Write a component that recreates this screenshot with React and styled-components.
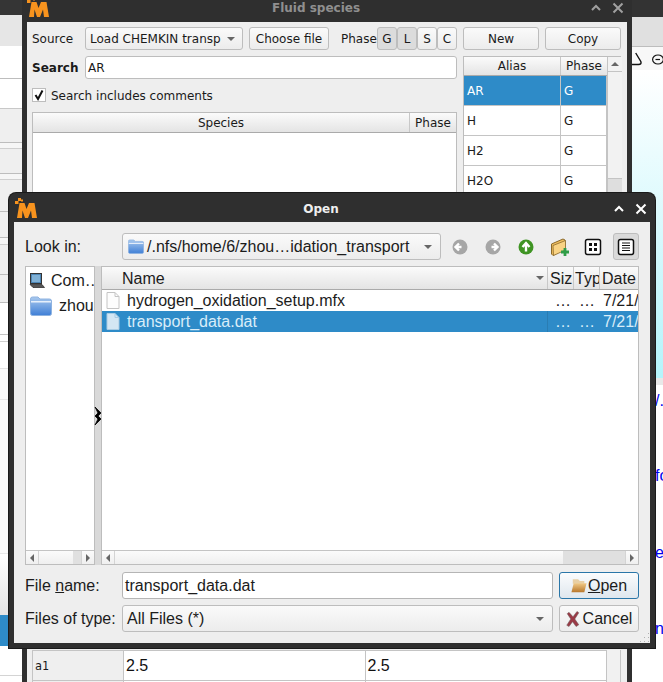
import React from "react";
import styled, {createGlobalStyle} from "styled-components";

const GlobalStyle = createGlobalStyle`
  html, body {
    margin: 0;
    padding: 0;
    overflow: hidden;
    background: white;
  }
`;

const QT_SANS = `"DejaVu Sans", sans-serif`;
const DIALOG_SANS = `"Liberation Sans", Arial, sans-serif`;
const SELECTED = "#2e8bc8";

const Desktop = styled.div`
  position: relative;
  width: 663px;
  height: 682px;
  overflow: hidden;
  display: flex;
  justify-content: space-between;
  background: white;
`;

const Strip = styled.div`
  display: flex;
  flex-direction: column;
  width: ${({$w}) => $w}px;
  height: 682px;
  overflow: hidden;
  flex: none;
`;

const Band = styled.div`
  flex: none;
  height: ${({$h}) => $h}px;
  background: ${({$bg}) => $bg};
  border-bottom: ${({$line}) => ($line ? `1px solid ${$line}` : "none")};
  box-sizing: border-box;
`;

const IconBand = styled(Band)`
  display: flex;
  align-items: center;
  gap: 8px;
  svg {
    flex: none;
    overflow: visible;
  }
`;

const LinkArea = styled.div`
  display: flex;
  flex-direction: column;
  padding-left: 23px;
  font: 16px ${DIALOG_SANS};
  color: #0000ee;
  white-space: nowrap;
`;

const LinkLine = styled.div`
  height: 19px;
  margin-top: ${({$top}) => $top}px;
  line-height: 19px;
`;

const Win = styled.div`
  position: absolute;
  left: ${({$left}) => $left}px;
  top: ${({$top}) => $top}px;
  width: ${({$w}) => $w}px;
  height: ${({$h}) => $h}px;
  box-sizing: border-box;
  display: flex;
  flex-direction: column;
  background: #2f2f2f;
  padding: 0 5px 5px;
  border-radius: ${({$round}) => ($round ? "7px 7px 0 0" : "0")};
  box-shadow: ${({$round}) => ($round ? "0 0 0 1px #1a1a1a" : "none")};
  overflow: hidden;
`;

const TitleBar = styled.div`
  flex: none;
  position: relative;
  box-sizing: border-box;
  height: ${({$h}) => $h}px;
  padding: ${({$pad}) => $pad}px 22px 0 0;
  display: flex;
  align-items: center;
  justify-content: center;
  font: bold 12px ${QT_SANS};
  color: ${({$color}) => $color};
`;

const LogoSlot = styled.div`
  position: absolute;
  left: ${({$left}) => $left}px;
  top: ${({$top}) => $top}px;
  display: flex;
`;

const TitleButtons = styled.div`
  position: absolute;
  right: ${({$right}) => $right}px;
  top: ${({$top}) => $top}px;
  display: flex;
  gap: 9px;
`;

const FluidBody = styled.div`
  flex: 1;
  min-height: 0;
  background: #eeeeee;
  padding: 5px 5px 0;
  display: flex;
  flex-direction: column;
  font: 12px ${QT_SANS};
  color: #1a1a1a;
`;

const Toolbar = styled.div`
  flex: none;
  height: 23px;
  display: flex;
  align-items: center;
`;

const FieldLabel = styled.span`
  flex: none;
  width: ${({$w}) => $w}px;
  margin-left: ${({$ml}) => $ml || 0}px;
  font-weight: ${({$bold}) => ($bold ? "bold" : "normal")};
  white-space: nowrap;
`;

const QtButton = styled.div`
  flex: none;
  box-sizing: border-box;
  width: ${({$w}) => $w}px;
  height: 23px;
  margin-left: ${({$ml}) => $ml || 0}px;
  display: flex;
  align-items: center;
  padding: 0 ${({$combo}) => ($combo ? "7px 0 4px" : "0")};
  justify-content: ${({$combo}) => ($combo ? "space-between" : "center")};
  border: 1px solid #bdbdbd;
  border-radius: 3px;
  background: ${({$on}) =>
    $on ? "#dcdcdc" : "linear-gradient(#fafafa, #ececec)"};
  white-space: nowrap;
`;

const PhaseGroup = styled.div`
  display: flex;
  margin-left: 1px;
`;

const Arrow = styled.span`
  flex: none;
  width: 0;
  height: 0;
  border-left: 4px solid transparent;
  border-right: 4px solid transparent;
  border-top: 4px solid #666;
`;

const FluidMain = styled.div`
  flex: none;
  height: 590px;
  margin-top: 6px;
  display: flex;
  gap: 6px;
`;

const LeftColumn = styled.div`
  flex: none;
  width: 425px;
  display: flex;
  flex-direction: column;
`;

const SearchRow = styled.div`
  height: 23px;
  display: flex;
  align-items: center;
`;

const TextInput = styled.div`
  flex: 1;
  box-sizing: border-box;
  height: ${({$h}) => $h}px;
  display: flex;
  align-items: center;
  padding-left: ${({$pad}) => $pad}px;
  background: white;
  border: 1px solid #bdbdbd;
  border-radius: 3px;
`;

const CheckRow = styled.div`
  height: 14px;
  margin-top: 9px;
  display: flex;
  align-items: center;
  gap: 5px;
`;

const CheckText = styled.span`
  padding-top: 2px;
`;

const CheckBox = styled.div`
  box-sizing: border-box;
  width: 14px;
  height: 14px;
  display: flex;
  align-items: center;
  justify-content: center;
  background: white;
  border: 1px solid #bdbdbd;
`;

const SpeciesTable = styled.div`
  flex: 1;
  margin-top: 10px;
  background: white;
  border: 1px solid #bdbdbd;
  box-sizing: border-box;
`;

const HeaderRow = styled.div`
  display: flex;
  flex: none;
  height: ${({$h}) => $h}px;
  box-sizing: border-box;
  background: linear-gradient(#fbfbfb, #e4e4e4);
  border-bottom: 1px solid #aaaaaa;
`;

const HeaderCell = styled.div`
  box-sizing: border-box;
  flex: ${({$w}) => ($w ? `0 0 ${$w}px` : 1)};
  display: flex;
  align-items: center;
  justify-content: center;
  overflow: hidden;
  white-space: nowrap;
  border-right: ${({$last}) => ($last ? "none" : "1px solid #c8c8c8")};
`;

const AliasPanel = styled.div`
  flex: none;
  width: 158px;
  box-sizing: border-box;
  display: flex;
  background: #eee;
  border: 1px solid #bdbdbd;
  border-bottom: none;
`;

const AliasTable = styled.div`
  flex: none;
  width: 143px;
  background: white;
`;

const AliasRow = styled.div`
  display: flex;
  height: 30px;
  box-sizing: border-box;
  border-bottom: 1px solid #c4c4c4;
  background: ${({$selected}) => ($selected ? SELECTED : "white")};
  color: ${({$selected}) => ($selected ? "white" : "#1a1a1a")};
`;

const AliasCell = styled.div`
  box-sizing: border-box;
  flex: ${({$w}) => ($w ? `0 0 ${$w}px` : 1)};
  display: flex;
  align-items: center;
  padding-left: 3px;
  border-right: 1px solid #c4c4c4;
`;

const VScroll = styled.div`
  flex: none;
  width: 14px;
  display: flex;
  flex-direction: column;
  background: #f2f2f2;
  border-left: 1px solid #c4c4c4;
`;

const ScrollCap = styled.div`
  height: 14px;
  display: flex;
  align-items: center;
  justify-content: center;
  border-bottom: 1px solid #c4c4c4;
`;

const ScrollThumb = styled.div`
  margin-top: ${({$top}) => $top}px;
  flex: 1;
  background: #dedede;
  border-top: 1px solid #c4c4c4;
`;

const CapUp = styled.span`
  width: 0;
  height: 0;
  border-left: 4px solid transparent;
  border-right: 4px solid transparent;
  border-bottom: 4px solid #666;
`;

const ParamFrame = styled.div`
  flex: none;
  margin-top: 4px;
  width: 589px;
  height: 70px;
  box-sizing: border-box;
  background: #f1f1f1;
  border-right: 1px solid #c4c4c4;
`;

const ParamTable = styled.div`
  width: 575px;
  box-sizing: border-box;
  background: white;
  border: 1px solid #c4c4c4;
`;

const ParamRow = styled.div`
  display: flex;
  height: 30px;
  box-sizing: border-box;
  border-bottom: 1px solid #c4c4c4;
`;

const ParamName = styled.div`
  flex: 0 0 91px;
  box-sizing: border-box;
  display: flex;
  align-items: center;
  padding-left: 2px;
  font: 11.5px "DejaVu Sans Mono", monospace;
  background: #efefef;
  border-right: 1px solid #c4c4c4;
`;

const ParamValue = styled.div`
  flex: 1;
  box-sizing: border-box;
  display: flex;
  align-items: center;
  padding-left: 2px;
  font: 16px ${DIALOG_SANS};
  color: #111;
  border-right: ${({$last}) => ($last ? "none" : "1px solid #c4c4c4")};
`;

const DialogBody = styled.div`
  position: relative;
  flex: 1;
  min-height: 0;
  box-sizing: border-box;
  background: #eeeeee;
  padding: 11px 11px 0;
  display: flex;
  flex-direction: column;
  font: 16px ${DIALOG_SANS};
  color: #1c1c1c;
`;

const DialogRow = styled.div`
  flex: none;
  height: 27px;
  margin-top: ${({$top}) => $top || 0}px;
  display: flex;
  align-items: center;
`;

const DialogCombo = styled.div`
  flex: none;
  box-sizing: border-box;
  width: ${({$w}) => $w}px;
  height: 27px;
  display: flex;
  align-items: center;
  justify-content: space-between;
  gap: 3px;
  padding: 0 8px 0 ${({$pad}) => $pad}px;
  border: 1px solid #bdbdbd;
  border-radius: 3px;
  background: linear-gradient(#fafafa, #ececec);
  white-space: nowrap;
`;

const ComboText = styled.span`
  flex: 1;
  display: flex;
  align-items: center;
  gap: 3px;
  min-width: 0;
  svg {
    flex: none;
  }
`;

const DialogInput = styled.div`
  flex: none;
  box-sizing: border-box;
  width: 431px;
  height: 27px;
  display: flex;
  align-items: center;
  padding-left: 2px;
  background: white;
  border: 1px solid #b5b5b5;
  border-radius: 3px;
`;

const DialogButton = styled.div`
  flex: none;
  box-sizing: border-box;
  width: 80px;
  height: 27px;
  margin-left: 6px;
  display: flex;
  align-items: center;
  justify-content: center;
  gap: ${({$gap}) => $gap}px;
  border-radius: 3px;
  border: 1px solid ${({$focus}) => ($focus ? "#2a76a8" : "#bdbdbd")};
  background: ${({$focus}) =>
    $focus
      ? "linear-gradient(#fbfcfd, #dfe7ee)"
      : "linear-gradient(#fafafa, #ececec)"};
`;

const NavBar = styled.div`
  flex: 1;
  margin-left: 6px;
  display: flex;
  justify-content: space-between;
`;

const NavButton = styled.div`
  box-sizing: border-box;
  width: 26px;
  height: 27px;
  display: flex;
  align-items: center;
  justify-content: center;
  border-radius: 3px;
  border: 1px solid ${({$on}) => ($on ? "#bdbdbd" : "transparent")};
  background: ${({$on}) => ($on ? "#dadada" : "transparent")};
`;

const Browser = styled.div`
  flex: none;
  height: 299px;
  margin-top: 6px;
  display: flex;
`;

const Pane = styled.div`
  flex: none;
  box-sizing: border-box;
  width: ${({$w}) => $w}px;
  display: flex;
  flex-direction: column;
  background: white;
  border: 1px solid #bdbdbd;
  overflow: hidden;
`;

const Splitter = styled.div`
  position: relative;
  flex: none;
  width: 6px;
  background: #d9d9d9;
`;

const ResizeCursor = styled.div`
  position: absolute;
  left: -1px;
  top: 141px;
  display: flex;
`;

const PlaceItem = styled.div`
  display: flex;
  align-items: center;
  flex: none;
  height: ${({$h}) => $h}px;
  gap: ${({$gap}) => $gap}px;
  padding-left: ${({$pad}) => $pad}px;
  white-space: nowrap;
  svg {
    flex: none;
  }
`;

const PaneFill = styled.div`
  flex: 1;
  min-height: 0;
`;

const ColumnHead = styled.div`
  position: relative;
  box-sizing: border-box;
  flex: ${({$w}) => ($w ? `0 0 ${$w}px` : 1)};
  display: flex;
  align-items: center;
  padding: 1px 0 0 ${({$pad}) => $pad}px;
  overflow: hidden;
  white-space: nowrap;
  border-right: ${({$last}) => ($last ? "none" : "1px solid #c8c8c8")};
`;

const SortArrow = styled(Arrow)`
  position: absolute;
  right: 3px;
  top: 9px;
`;

const FileRow = styled.div`
  display: flex;
  height: 21px;
  flex: none;
  background: ${({$selected}) => ($selected ? SELECTED : "white")};
  color: ${({$selected}) => ($selected ? "#d9edf9" : "#1c1c1c")};
`;

const FileCell = styled.div`
  box-sizing: border-box;
  flex: ${({$w}) => ($w ? `0 0 ${$w}px` : 1)};
  display: flex;
  align-items: center;
  gap: ${({$gap}) => $gap || 0}px;
  padding-left: ${({$pad}) => $pad}px;
  overflow: hidden;
  white-space: nowrap;
  border-right: ${({$divider}) => ($divider ? "1px solid #2a7db3" : "none")};
  svg {
    flex: none;
  }
`;

const HScroll = styled.div`
  flex: none;
  height: 13px;
  display: flex;
  background: linear-gradient(#fbfbfb, #efefef);
  border-top: 1px solid #c4c4c4;
`;

const HScrollCap = styled.div`
  flex: none;
  box-sizing: border-box;
  width: 13px;
  display: flex;
  align-items: center;
  justify-content: center;
  border-${({$side}) => ($side === "left" ? "right" : "left")}: 1px solid #d4d4d4;
`;

const HTrack = styled.div`
  flex: 1;
`;

const HThumb = styled.div`
  flex: none;
  width: ${({$w}) => $w}px;
  background: #e0e0e0;
`;

const Tri = styled.span`
  width: 0;
  height: 0;
  border-top: 4px solid transparent;
  border-bottom: 4px solid transparent;
  ${({$dir}) =>
    $dir === "left"
      ? "border-right: 4px solid #666;"
      : "border-left: 4px solid #666;"}
`;

const Grip = styled.div`
  position: absolute;
  right: 0;
  bottom: 0;
  display: flex;
`;

const Logo = () => (
  <svg width="22" height="20" viewBox="0 0 22 20">
    <polygon
      fill="#f7931e"
      points="2,20 4.5,5 9.5,5 11.5,11 14,5 19.5,5 22,20 17,20 16,12.5 13,20 10,20 7.5,12.5 7,20"
    />
    <rect x="0" y="3" width="3.5" height="3" fill="#f7931e"/>
    <rect x="3" y="0" width="3" height="3" fill="#f7931e"/>
    <rect x="6" y="1.5" width="2" height="2" fill="#f7931e"/>
  </svg>
);

const ChevronUp = ({color}) => (
  <svg width="14" height="14" viewBox="0 0 14 14">
    <path d="M3 9 L7 5 L11 9" fill="none" stroke={color} strokeWidth="2"/>
  </svg>
);

const CloseX = ({color}) => (
  <svg width="12" height="14" viewBox="0 0 12 14">
    <path d="M1.5 2.5 L10.5 11.5 M10.5 2.5 L1.5 11.5" fill="none" stroke={color} strokeWidth="2"/>
  </svg>
);

const CheckMark = () => (
  <svg width="12" height="12" viewBox="0 0 12 12">
    <path d="M2.5 6 L5 10 L9.5 1.5" fill="none" stroke="#111" strokeWidth="2"/>
  </svg>
);

const BlueFolder = ({w, h}) => (
  <svg width={w} height={h} viewBox="0 0 22 20">
    <defs>
      <linearGradient id="blueFolder" x1="0" y1="0" x2="0" y2="1">
        <stop offset="0" stopColor="#a9c9ee"/>
        <stop offset="1" stopColor="#3f7fd6"/>
      </linearGradient>
    </defs>
    <path d="M0.5 3 Q0.5 1 2.5 1 H8 L10 3 H19.5 Q21.5 3 21.5 5 V17.5 Q21.5 19.5 19.5 19.5 H2.5 Q0.5 19.5 0.5 17.5 Z" fill="url(#blueFolder)" stroke="#8fb3e0"/>
    <rect x="1" y="5" width="20" height="1.5" fill="#e6f0fb"/>
  </svg>
);

const ComputerIcon = () => (
  <svg width="16" height="16" viewBox="0 0 16 16">
    <rect x="1.5" y="0.5" width="11" height="10" fill="#4d86b5" stroke="#333"/>
    <rect x="3" y="2" width="8" height="7" fill="#7fb0d5"/>
    <path d="M1 11.5 H13 L15.5 14.5 H4 Z" fill="#555" stroke="#222" strokeWidth="0.7"/>
  </svg>
);

const PageIcon = ({selected}) => (
  <svg width="14" height="17" viewBox="0 0 14 17">
    <path
      d="M1 .5 H9 L13 4.5 V16.5 H1 Z"
      fill={selected ? "#d4e6f3" : "#fdfdfd"}
      stroke={selected ? "#a8cbe3" : "#c4c4c4"}
    />
    <path d="M9 .5 V4.5 H13" fill="none" stroke={selected ? "#a8cbe3" : "#c4c4c4"}/>
  </svg>
);

const NavCircle = ({color, dir}) => {
  const arrows = {
    left: "M11.5 10 H6 M9 6.5 L5.5 10 L9 13.5",
    right: "M8.5 10 H14 M11 6.5 L14.5 10 L11 13.5",
    up: "M10 14.5 V6.5 M6.5 10 L10 6 L13.5 10"
  };
  return (
    <svg width="20" height="20" viewBox="0 0 20 20">
      <circle cx="10" cy="10" r="7.5" fill={color}/>
      <path d={arrows[dir]} fill="none" stroke="white" strokeWidth="2.4"/>
    </svg>
  );
};

const NewFolderIcon = () => (
  <svg width="20" height="20" viewBox="0 0 20 20">
    <path d="M1.5 7 L13 2 L15 3 V12 L3 18.5 L1.5 17 Z" fill="#f2bf5e" stroke="#8a6a2c"/>
    <path d="M3 8.5 L15.5 3.5 V13 L3.5 18.5 Z" fill="#f9d384" stroke="#8a6a2c" strokeWidth="0.8"/>
    <path d="M15 11 V19 M11 15 H19" stroke="#2f9c46" strokeWidth="2.8"/>
  </svg>
);

const GridViewIcon = () => (
  <svg width="18" height="18" viewBox="0 0 18 18">
    <rect x="1.5" y="1.5" width="15" height="15" rx="2" fill="white" stroke="#111" strokeWidth="1.5"/>
    <rect x="5" y="5" width="3" height="3" fill="#111"/>
    <rect x="10" y="5" width="3" height="3" fill="#111"/>
    <rect x="5" y="10" width="3" height="3" fill="#111"/>
    <rect x="10" y="10" width="3" height="3" fill="#111"/>
  </svg>
);

const ListViewIcon = () => (
  <svg width="18" height="18" viewBox="0 0 18 18">
    <rect x="1.5" y="1.5" width="15" height="15" rx="2" fill="white" stroke="#111" strokeWidth="1.5"/>
    <path d="M5 5 H13 M5 7.5 H13 M5 10 H13 M5 12.5 H13" stroke="#111" strokeWidth="1.2"/>
  </svg>
);

const OpenFolderIcon = () => (
  <svg width="16" height="15" viewBox="0 0 18 16">
    <defs>
      <linearGradient id="openFolder" x1="0" y1="0" x2="0" y2="1">
        <stop offset="0" stopColor="#f0c987"/>
        <stop offset="1" stopColor="#b9782c"/>
      </linearGradient>
    </defs>
    <path d="M2 1 H8 L10 3 H15 V6 H2 Z" fill="#e8cfa4"/>
    <path d="M3 5.5 H17.5 L15 15.5 H0.5 Z" fill="url(#openFolder)"/>
  </svg>
);

const CancelIcon = () => (
  <svg width="14" height="16" viewBox="0 0 15 18">
    <path d="M3 1.5 L7.5 6.5 L12 0.5 L14 2 L9.5 9 L14 15.5 L11 17.5 L7 12 L3 17.5 L0.5 16 L5 9 L1 3 Z" fill="#9b3a46" stroke="#6d5a5a" strokeWidth="0.6"/>
  </svg>
);

const CursorIcon = () => (
  <svg width="8" height="18" viewBox="0 0 8 18">
    <path d="M1 0 L7 6 L4 9 L7 12 L1 18 L4 12 L1 9 L4 6 Z" fill="#000" stroke="#000" strokeWidth="0.8"/>
  </svg>
);

const GripIcon = () => (
  <svg width="11" height="11" viewBox="0 0 11 11">
    <path d="M9 1h1v1H9z M9 5h1v1H9z M5 5h1v1H5z M9 9h1v1H9z M5 9h1v1H5z M1 9h1v1H1z" fill="#b0b0b0"/>
  </svg>
);

const leftBands = [
  {h: 15, bg: "#353535"},
  {h: 31, bg: "#e6e6e6"},
  {h: 33, bg: "white", line: "#bdbdbd"},
  {h: 30, bg: "white", line: "#c8c8c8"},
  {h: 34, bg: "#efefef", line: "#bdbdbd"},
  {h: 6, bg: "#f6f6f6", line: "#cfcfcf"},
  {h: 25, bg: "#efefef", line: "#bdbdbd"},
  {h: 6, bg: "#f6f6f6", line: "#cfcfcf"},
  {h: 32, bg: "#efefef", line: "#bdbdbd"},
  {h: 26, bg: "#efefef", line: "#bdbdbd"},
  {h: 7, bg: "#f6f6f6", line: "#cfcfcf"},
  {h: 30, bg: "#efefef", line: "#bdbdbd"},
  {h: 28, bg: "#efefef", line: "#bdbdbd"},
  {h: 32, bg: "white", line: "#c4c4c4"},
  {h: 7, bg: "white", line: "#cfcfcf"},
  {h: 27, bg: "white", line: "#e4e4e4"},
  {h: 31, bg: "#fbfbfb", line: "#e8e8e8"},
  {h: 154, bg: "#fbfbfb", line: "#e8e8e8"},
  {h: 61, bg: "linear-gradient(#ffffff, #e4e4e4)"},
  {h: 31, bg: SELECTED},
  {h: 30, bg: "white", line: "#d4d4d4"},
  {h: 7, bg: "white"}
];

const species = [
  {alias: "AR", selected: true},
  {alias: "H"},
  {alias: "H2"},
  {alias: "H2O"}
];

function FluidWindow() {
  return (
    <Win $left={22} $top={-6} $w={610} $h={700}>
      <TitleBar $h={28} $pad={0} $color="#8f8f8f">
        <LogoSlot $left={0} $top={3}>
          <Logo/>
        </LogoSlot>
        Fluid species
        <TitleButtons $right={3} $top={7}>
          <ChevronUp color="#a0a0a0"/>
          <CloseX color="#a0a0a0"/>
        </TitleButtons>
      </TitleBar>
      <FluidBody>
        <Toolbar>
          <FieldLabel $w={53}>Source</FieldLabel>
          <QtButton $w={158} $combo>
            Load CHEMKIN transp
            <Arrow/>
          </QtButton>
          <QtButton $w={80} $ml={6}>Choose file</QtButton>
          <FieldLabel $w={35} $ml={12}>Phase</FieldLabel>
          <PhaseGroup>
            <QtButton $w={20} $on>G</QtButton>
            <QtButton $w={20} $on>L</QtButton>
            <QtButton $w={20}>S</QtButton>
            <QtButton $w={20}>C</QtButton>
          </PhaseGroup>
          <QtButton $w={76} $ml={6}>New</QtButton>
          <QtButton $w={76} $ml={6}>Copy</QtButton>
        </Toolbar>
        <FluidMain>
          <LeftColumn>
            <SearchRow>
              <FieldLabel $w={53} $bold>Search</FieldLabel>
              <TextInput $h={23} $pad={2}>AR</TextInput>
            </SearchRow>
            <CheckRow>
              <CheckBox>
                <CheckMark/>
              </CheckBox>
              <CheckText>Search includes comments</CheckText>
            </CheckRow>
            <SpeciesTable>
              <HeaderRow $h={20}>
                <HeaderCell>Species</HeaderCell>
                <HeaderCell $w={46} $last>Phase</HeaderCell>
              </HeaderRow>
            </SpeciesTable>
          </LeftColumn>
          <AliasPanel>
            <AliasTable>
              <HeaderRow $h={19}>
                <HeaderCell $w={97}>Alias</HeaderCell>
                <HeaderCell $last>Phase</HeaderCell>
              </HeaderRow>
              {species.map(item => (
                <AliasRow key={item.alias} $selected={item.selected}>
                  <AliasCell $w={97}>{item.alias}</AliasCell>
                  <AliasCell>G</AliasCell>
                </AliasRow>
              ))}
            </AliasTable>
            <VScroll>
              <ScrollCap>
                <CapUp/>
              </ScrollCap>
              <ScrollThumb $top={106}/>
            </VScroll>
          </AliasPanel>
        </FluidMain>
        <ParamFrame>
          <ParamTable>
            <ParamRow>
              <ParamName>a1</ParamName>
              <ParamValue>2.5</ParamValue>
              <ParamValue $last>2.5</ParamValue>
            </ParamRow>
            <ParamRow>
              <ParamName/>
              <ParamValue/>
              <ParamValue $last/>
            </ParamRow>
          </ParamTable>
        </ParamFrame>
      </FluidBody>
    </Win>
  );
}

function OpenDialog() {
  return (
    <Win $left={9} $top={193} $w={646} $h={455} $round>
      <TitleBar $h={29} $pad={2} $color="#eeeeee">
        <LogoSlot $left={1} $top={5}>
          <Logo/>
        </LogoSlot>
        Open
        <TitleButtons $right={3} $top={9}>
          <ChevronUp color="white"/>
          <CloseX color="white"/>
        </TitleButtons>
      </TitleBar>
      <DialogBody>
        <DialogRow>
          <FieldLabel $w={97}>Look in:</FieldLabel>
          <DialogCombo $w={319} $pad={5}>
            <ComboText>
              <BlueFolder w={16} h={15}/>
              /.nfs/home/6/zhou…idation_transport
            </ComboText>
            <Arrow/>
          </DialogCombo>
          <NavBar>
            <NavButton><NavCircle color="#a6a6a6" dir="left"/></NavButton>
            <NavButton><NavCircle color="#a6a6a6" dir="right"/></NavButton>
            <NavButton><NavCircle color="#3f9423" dir="up"/></NavButton>
            <NavButton><NewFolderIcon/></NavButton>
            <NavButton><GridViewIcon/></NavButton>
            <NavButton $on><ListViewIcon/></NavButton>
          </NavBar>
        </DialogRow>
        <Browser>
          <Pane $w={70}>
            <PlaceItem $h={28} $gap={6} $pad={3}>
              <ComputerIcon/>
              Com…
            </PlaceItem>
            <PlaceItem $h={22} $gap={7} $pad={4}>
              <BlueFolder w={22} h={20}/>
              zhou
            </PlaceItem>
            <PaneFill/>
            <HScroll>
              <HScrollCap $side="left"><Tri $dir="left"/></HScrollCap>
              <HTrack/>
              <HThumb $w={8}/>
              <HScrollCap $side="right"><Tri $dir="right"/></HScrollCap>
            </HScroll>
          </Pane>
          <Splitter>
            <ResizeCursor>
              <CursorIcon/>
            </ResizeCursor>
          </Splitter>
          <Pane $w={538}>
            <HeaderRow $h={23}>
              <ColumnHead $pad={20}>
                Name
                <SortArrow/>
              </ColumnHead>
              <ColumnHead $w={26} $pad={2}>Siz</ColumnHead>
              <ColumnHead $w={26} $pad={1}>Typ</ColumnHead>
              <ColumnHead $w={38} $pad={2} $last>Date</ColumnHead>
            </HeaderRow>
            <FileRow>
              <FileCell $pad={4} $gap={7}>
                <PageIcon/>
                hydrogen_oxidation_setup.mfx
              </FileCell>
              <FileCell $w={26} $pad={7}>…</FileCell>
              <FileCell $w={26} $pad={5}>…</FileCell>
              <FileCell $w={38} $pad={3}>7/21/2</FileCell>
            </FileRow>
            <FileRow $selected>
              <FileCell $pad={4} $gap={7} $divider>
                <PageIcon selected/>
                transport_data.dat
              </FileCell>
              <FileCell $w={26} $pad={7}>…</FileCell>
              <FileCell $w={26} $pad={5}>…</FileCell>
              <FileCell $w={38} $pad={3}>7/21/2</FileCell>
            </FileRow>
            <PaneFill/>
            <HScroll>
              <HScrollCap $side="left"><Tri $dir="left"/></HScrollCap>
              <HTrack/>
              <HThumb $w={62}/>
              <HScrollCap $side="right"><Tri $dir="right"/></HScrollCap>
            </HScroll>
          </Pane>
        </Browser>
        <DialogRow $top={7}>
          <FieldLabel $w={97}>File <u>n</u>ame:</FieldLabel>
          <DialogInput>transport_data.dat</DialogInput>
          <DialogButton $focus $gap={1}>
            <OpenFolderIcon/>
            <span><u>O</u>pen</span>
          </DialogButton>
        </DialogRow>
        <DialogRow $top={6}>
          <FieldLabel $w={97}>Files of type:</FieldLabel>
          <DialogCombo $w={431} $pad={4}>
            All Files (*)
            <Arrow/>
          </DialogCombo>
          <DialogButton $gap={3}>
            <CancelIcon/>
            Cancel
          </DialogButton>
        </DialogRow>
        <Grip>
          <GripIcon/>
        </Grip>
      </DialogBody>
    </Win>
  );
}

export default function App() {
  return (
    <>
      <GlobalStyle/>
      <Desktop>
        <Strip $w={22}>
          {leftBands.map((band, index) => (
            <Band key={index} $h={band.h} $bg={band.bg} $line={band.line}/>
          ))}
        </Strip>
        <Strip $w={31}>
          <Band $h={17} $bg="#333333"/>
          <Band $h={30} $bg="#e0e0e0" $line="#bdbdbd"/>
          <IconBand $h={23} $bg="#f8f8f8">
            <svg width="12" height="14" viewBox="0 0 12 14">
              <path d="M3.7 1 L8.8 9.5 Q9.8 12.5 6.5 12.5 H-2" fill="none" stroke="#111" strokeWidth="1.4"/>
            </svg>
            <svg width="12" height="12" viewBox="0 0 12 12">
              <ellipse cx="6" cy="6.5" rx="5.4" ry="4.5" fill="none" stroke="#111" strokeWidth="1.2"/>
              <path d="M3.5 6.5 H8" stroke="#111" strokeWidth="1.2"/>
            </svg>
          </IconBand>
          <Band $h={308} $bg="linear-gradient(#ffffff, #b4f4fb)"/>
          <Band $h={7} $bg="#e8e8e8"/>
          <LinkArea>
            <LinkLine $top={6}>/.</LinkLine>
            <LinkLine $top={56}>fo</LinkLine>
            <LinkLine $top={58}>ec</LinkLine>
            <LinkLine $top={57}>n</LinkLine>
          </LinkArea>
        </Strip>
        <FluidWindow/>
        <OpenDialog/>
      </Desktop>
    </>
  );
}
